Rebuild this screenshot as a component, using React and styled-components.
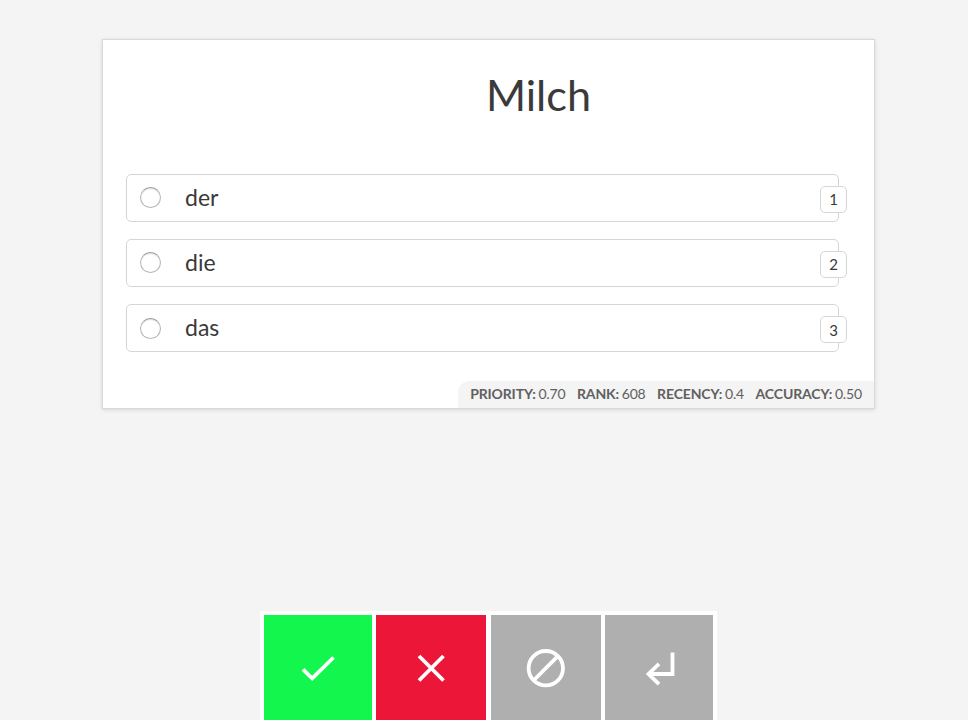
import React from "react";
import styled, { createGlobalStyle } from "styled-components";

const GlobalStyle = createGlobalStyle`
  * { box-sizing: border-box; }
  body {
    margin: 0;
    background: #f4f4f4;
    color: #3a3a3a;
    font-family: Lato, "Open Sans", sans-serif;
    overflow: hidden;
  }
`;

const Page = styled.main`
  height: 720px;
  display: flex;
  flex-direction: column;
  justify-content: space-between;
  padding-top: 39px;
  overflow: hidden;
`;

const Card = styled.section`
  display: flex;
  flex-direction: column;
  width: 773px;
  height: 370px;
  margin-left: 102px;
  background: #fff;
  border: 1px solid #d8d8d8;
  box-shadow: 0 1px 4px rgba(0, 0, 0, 0.12);
`;

const Title = styled.h1`
  margin: 28px 0 0 100px;
  height: 52px;
  line-height: 52px;
  font-size: 43.2px;
  font-weight: 400;
  text-align: center;
`;

const Options = styled.div`
  display: flex;
  flex-direction: column;
  gap: 17.3px;
  margin: 53.5px 35px 0 23px;
`;

const Option = styled.button`
  display: flex;
  align-items: center;
  height: 48px;
  padding: 0 0 0 13px;
  font: inherit;
  font-size: 23px;
  color: inherit;
  text-align: left;
  background: #fff;
  border: 1px solid #d6d6d6;
  border-radius: 5px;
`;

const Radio = styled.span`
  width: 21px;
  height: 21px;
  margin-right: 24px;
  border: 1px solid #b4b4b4;
  border-top-color: #9c9c9c;
  border-radius: 50%;
  box-shadow: inset 0 1px 1px rgba(0, 0, 0, 0.12);
`;

const Answer = styled.span`
  flex: 1;
  line-height: 28px;
  padding-bottom: 2px;
`;

const KeyHint = styled.kbd`
  display: flex;
  align-items: center;
  justify-content: center;
  width: 27px;
  height: 27px;
  margin: 3px -9px 0 0;
  font-family: inherit;
  font-size: 15px;
  background: #fff;
  border: 1px solid #d6d6d6;
  border-radius: 5px;
`;

const Stats = styled.footer`
  display: flex;
  align-items: center;
  align-self: flex-end;
  gap: 11.5px;
  height: 27px;
  margin-top: auto;
  padding: 0 12px 2px;
  font-size: 14px;
  letter-spacing: -0.14px;
  word-spacing: -0.8px;
  white-space: pre;
  color: #606060;
  background: #f4f4f4;
  border-top-left-radius: 12px;
`;

const Actions = styled.nav`
  display: flex;
  gap: 4.4px;
  width: 457px;
  height: 109px;
  margin-left: 260px;
  padding: 4px 4px 0;
  background: #fff;
`;

const Action = styled.button`
  display: flex;
  justify-content: center;
  width: ${(p) => p.$width}px;
  padding: 29px 0 0;
  border: 0;
  background: ${(p) => p.$color};
`;

const Icon = styled.svg`
  flex: none;
  width: 48px;
  height: 48px;
  fill: none;
  stroke: #fff;
  stroke-width: 3.8;
`;

const options = ["der", "die", "das"];

const stats = [
  ["PRIORITY:", "0.70"],
  ["RANK:", "608"],
  ["RECENCY:", "0.4"],
  ["ACCURACY:", "0.50"],
];

const actions = [
  { label: "Correct", color: "#12f64d", width: 108, icon: <path d="M9 25.3 18.2 34.3 39.5 13.5" /> },
  { label: "Wrong", color: "#ec1638", width: 110, icon: <path d="M12 12 36.5 36.5M36.5 12 12 36.5" /> },
  {
    label: "Skip",
    color: "#afafaf",
    width: 110,
    icon: (
      <>
        <circle cx="23.8" cy="24.2" r="17.2" />
        <path d="M12 36 35.6 12.4" />
      </>
    ),
  },
  { label: "Enter", color: "#afafaf", width: 108, icon: <path d="M37.5 8.5V30H13.5M24 19.8 13.5 30 24 40.2" /> },
];

export default function App() {
  return (
    <>
      <GlobalStyle />
      <Page>
        <Card>
          <Title>Milch</Title>
          <Options>
            {options.map((text, i) => (
              <Option key={text}>
                <Radio />
                <Answer>{text}</Answer>
                <KeyHint>{i + 1}</KeyHint>
              </Option>
            ))}
          </Options>
          <Stats>
            {stats.map(([name, value]) => (
              <span key={name}>
                <b>{name}</b> {value}
              </span>
            ))}
          </Stats>
        </Card>
        <Actions>
          {actions.map((a) => (
            <Action key={a.label} aria-label={a.label} $color={a.color} $width={a.width}>
              <Icon viewBox="0 0 48 48">{a.icon}</Icon>
            </Action>
          ))}
        </Actions>
      </Page>
    </>
  );
}
